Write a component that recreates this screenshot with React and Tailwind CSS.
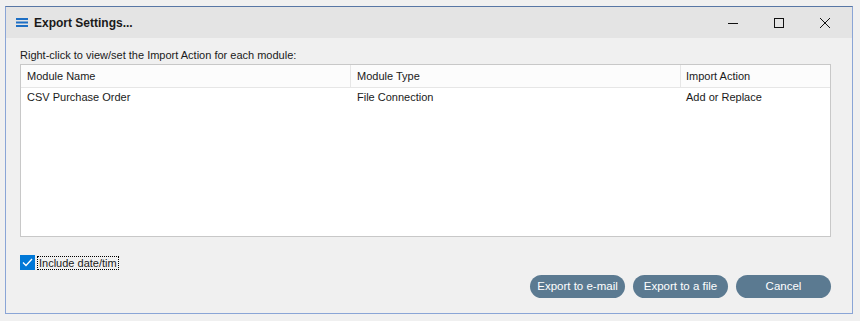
// Windows-style "Export Settings..." dialog.
const rows = [{ name: "CSV Purchase Order", type: "File Connection", action: "Add or Replace" }];

function MenuIcon() {
  return (
    <svg width="12" height="9" viewBox="0 0 12 9" className="shrink-0">
      <rect x="0" y="0" width="12" height="2" fill="#1e6fc4" />
      <rect x="0" y="3.5" width="12" height="2" fill="#1e6fc4" />
      <rect x="0" y="7" width="12" height="2" fill="#1e6fc4" />
    </svg>
  );
}

function Btn({ children }) {
  return (
    <button className="h-[23px] w-[95px] rounded-full bg-[#5b7a91] text-[11.5px] text-white">
      {children}
    </button>
  );
}

export default function App() {
  return (
    <div
      className="h-[321px] w-[860px] bg-[#f0f0f0] pl-[5px] pt-[6px] text-[11px] text-[#1a1a1a]"
      style={{ fontFamily: '"Liberation Sans", Arial, sans-serif' }}
    >
      <div className="flex h-[308px] w-[848px] flex-col border border-[#8aa5d6] border-t-[#5877a5] bg-[#f0f0f0]">
        {/* title bar */}
        <div className="flex h-[31px] items-center bg-[#e4e4e4] pl-[10px] pr-[4px]">
          <MenuIcon />
          <span className="ml-[6px] text-[12px] font-bold">Export Settings...</span>
          <div className="ml-auto flex h-full items-center">
            <div className="flex h-full w-[46px] items-center justify-center">
              <svg width="10" height="10" viewBox="0 0 10 10">
                <path d="M0 5.5 H10" stroke="#111" strokeWidth="1" />
              </svg>
            </div>
            <div className="flex h-full w-[46px] items-center justify-center">
              <svg width="10" height="10" viewBox="0 0 10 10">
                <rect x="0.5" y="0.5" width="9" height="9" fill="none" stroke="#111" strokeWidth="1" />
              </svg>
            </div>
            <div className="flex h-full w-[46px] items-center justify-center">
              <svg width="10" height="10" viewBox="0 0 10 10">
                <path d="M0 0 L10 10 M10 0 L0 10" stroke="#111" strokeWidth="1" />
              </svg>
            </div>
          </div>
        </div>

        <div className="flex flex-1 flex-col px-[14px]">
          <div className="mt-[9px] leading-[16px]">Right-click to view/set the Import Action for each module:</div>
          <div className="mt-[1px] h-[173px] w-[811px] border border-[#c8c8c8] bg-white">
            <div className="flex h-[23px] border-b border-[#e6e6e6] bg-[#fcfcfc]">
              <div className="w-[330px] border-r border-[#e6e6e6] pl-[6px] leading-[23px]">Module Name</div>
              <div className="w-[330px] border-r border-[#e6e6e6] pl-[6px] leading-[23px]">Module Type</div>
              <div className="flex-1 pl-[5px] leading-[23px]">Import Action</div>
            </div>
            {rows.map((r) => (
              <div key={r.name} className="flex h-[19px] leading-[19px]">
                <div className="w-[330px] pl-[6px]">{r.name}</div>
                <div className="w-[330px] pl-[6px]">{r.type}</div>
                <div className="flex-1 pl-[5px]">{r.action}</div>
              </div>
            ))}
          </div>

          <div className="mt-[18px] flex items-center">
            <div className="flex h-[15px] w-[15px] items-center justify-center bg-[#0078d7]">
              <svg width="11" height="9" viewBox="0 0 11 9">
                <path d="M1 4.5 L4 7.5 L10 1" fill="none" stroke="white" strokeWidth="1.3" />
              </svg>
            </div>
            <span className="ml-[2px] border border-dotted border-black px-[1px] leading-[12px]">Include date/tim</span>
          </div>

          <div className="mt-[5px] flex w-[811px] justify-end gap-[8px]">
            <Btn>Export to e-mail</Btn>
            <Btn>Export to a file</Btn>
            <Btn>Cancel</Btn>
          </div>
        </div>
      </div>
    </div>
  );
}
